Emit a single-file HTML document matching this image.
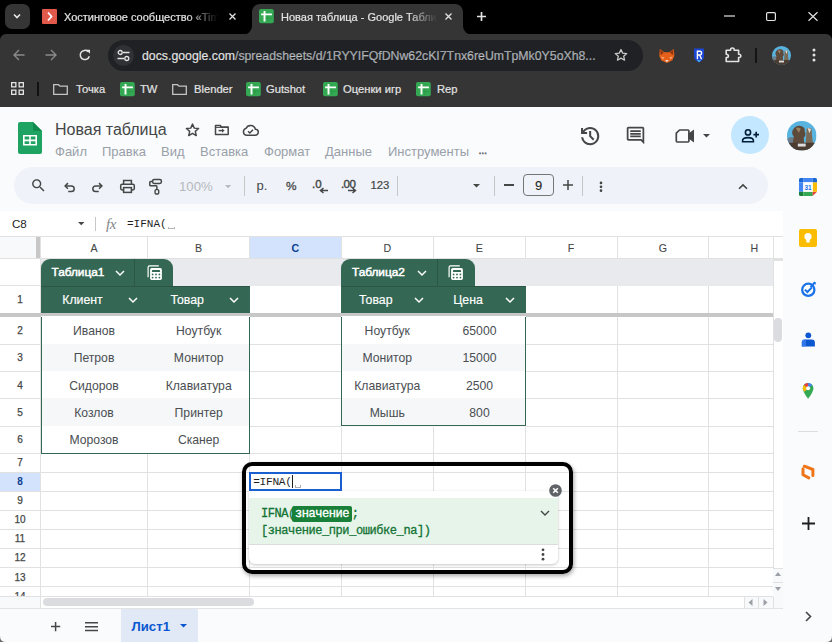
<!DOCTYPE html>
<html><head><meta charset="utf-8">
<style>
*{box-sizing:border-box;margin:0;padding:0}
html,body{width:832px;height:642px;overflow:hidden;background:#000;font-family:"Liberation Sans",sans-serif}
.a{position:absolute}
svg{position:absolute;overflow:visible}
.t{position:absolute;white-space:nowrap;line-height:1}
/* chrome */
#tabs{left:0;top:0;width:832px;height:35px;background:#000}
#tb{left:0;top:34px;width:832px;height:73px;background:#353535;border-radius:6px 6px 0 0}
#page{left:0;top:107px;width:832px;height:535px;background:#f9fbfd}
.ct{color:#e3e3e3;font-size:11px;-webkit-text-stroke:0.2px #e3e3e3}
.bm{color:#e3e3e3;font-size:11.2px;-webkit-text-stroke:0.2px #e3e3e3}
</style></head><body>
<!-- TAB STRIP -->
<div id="tabs" class="a"></div>
<div class="a" style="left:5px;top:4px;width:25px;height:25px;border-radius:7px;background:#353535"></div>
<svg style="left:12px;top:11px" width="10" height="10" viewBox="0 0 10 10"><path d="M2 3.5 L5 6.5 L8 3.5" fill="none" stroke="#e8e8e8" stroke-width="1.6"/></svg>
<!-- inactive tab -->
<div class="a" style="left:42px;top:9px;width:15px;height:15px;background:#e0594b;border-radius:1px"></div>
<svg style="left:42px;top:9px" width="15" height="15" viewBox="0 0 15 15"><path d="M6 3.5 L9.5 7.5 L6 11.5" fill="none" stroke="#fff" stroke-width="1.8"/></svg>
<div class="t ct" style="left:64px;top:12px;width:154px;overflow:hidden;-webkit-mask-image:linear-gradient(90deg,#000 80%,transparent)">Хостинговое сообщество «Timeweb»</div>
<svg style="left:229px;top:12.6px" width="7" height="7" viewBox="0 0 7 7"><path d="M0.5 0.5L6.5 6.5M6.5 0.5L0.5 6.5" stroke="#e3e3e3" stroke-width="1.3"/></svg>
<!-- active tab -->
<div class="a" style="left:252px;top:3.7px;width:211px;height:31.3px;background:#353535;border-radius:8px 8px 0 0"></div>
<svg style="left:243px;top:26px" width="9" height="9" viewBox="0 0 9 9"><path d="M0 9 A9 9 0 0 0 9 0 V9Z" fill="#353535"/></svg>
<svg style="left:463px;top:26px" width="9" height="9" viewBox="0 0 9 9"><path d="M9 9 A9 9 0 0 1 0 0 V9Z" fill="#353535"/></svg>
<svg style="left:259.2px;top:9.2px" width="15" height="15" viewBox="0 0 15 15"><rect width="14.8" height="14.3" rx="2" fill="#34a853"/><path d="M4.8 5.4H10.2M4.8 9.4H13M9 2.5V12.5" stroke="#2a9a48" stroke-width="0.8"/><path d="M2.1 5.4H12.9M5.5 2.1V12.6" stroke="#fff" stroke-width="1.9"/></svg>
<div class="t ct" style="left:281px;top:12px;width:156px;overflow:hidden;-webkit-mask-image:linear-gradient(90deg,#000 82%,transparent)">Новая таблица - Google Таблицы</div>
<svg style="left:445px;top:12.6px" width="7" height="7" viewBox="0 0 7 7"><path d="M0.5 0.5L6.5 6.5M6.5 0.5L0.5 6.5" stroke="#e3e3e3" stroke-width="1.3"/></svg>
<svg style="left:476.5px;top:12px" width="9" height="9" viewBox="0 0 9 9"><path d="M4.5 0V9M0 4.5H9" stroke="#e3e3e3" stroke-width="1.7"/></svg>
<!-- window controls -->
<svg style="left:724px;top:15px" width="11" height="2" viewBox="0 0 11 2"><path d="M0 1H11" stroke="#e3e3e3" stroke-width="1.2"/></svg>
<svg style="left:766px;top:12px" width="10" height="9" viewBox="0 0 10 9"><rect x="0.6" y="0.6" width="8.8" height="7.9" rx="1.2" fill="none" stroke="#e3e3e3" stroke-width="1.2"/></svg>
<svg style="left:808px;top:12px" width="10" height="9" viewBox="0 0 10 9"><path d="M0.5 0.3L9.5 8.7M9.5 0.3L0.5 8.7" stroke="#e3e3e3" stroke-width="1.2"/></svg>

<!-- TOOLBAR -->
<div id="tb" class="a"></div>
<svg style="left:13px;top:49px" width="12" height="12" viewBox="0 0 12 12"><path d="M11.5 6H1M6 1L1 6L6 11" fill="none" stroke="#8a8a8a" stroke-width="1.4"/></svg>
<svg style="left:45px;top:49px" width="12" height="12" viewBox="0 0 12 12"><path d="M0.5 6H11M6 1L11 6L6 11" fill="none" stroke="#8a8a8a" stroke-width="1.4"/></svg>
<svg style="left:79px;top:49px" width="12" height="12" viewBox="0 0 12 12"><path d="M10.3 7.2A4.6 4.6 0 1 1 9 2.6" fill="none" stroke="#e3e3e3" stroke-width="1.5"/><path d="M7 0.8H11V4.8Z" fill="#e3e3e3"/></svg>
<div class="a" style="left:108px;top:40px;width:535px;height:31px;border-radius:16px;background:#202124"></div>
<div class="a" style="left:113px;top:45px;width:21px;height:21px;border-radius:50%;background:#303134"></div>
<svg style="left:117px;top:49px" width="13" height="13" viewBox="0 0 13 13"><path d="M6 3.5H12.5M0.5 9.5H7" stroke="#e3e3e3" stroke-width="1.3"/><circle cx="3.2" cy="3.5" r="2" fill="none" stroke="#e3e3e3" stroke-width="1.3"/><circle cx="9.8" cy="9.5" r="2" fill="none" stroke="#e3e3e3" stroke-width="1.3"/></svg>
<div class="t" style="left:142px;top:50px;font-size:12.3px;color:#e3e3e3;-webkit-text-stroke:0.15px #e3e3e3">docs.google.com<span style="color:#9aa0a6">/spreadsheets/d/1RYYIFQfDNw62cKI7Tnx6reUmTpMk0Y5oXh8...</span></div>
<svg style="left:614px;top:48px" width="14" height="14" viewBox="0 0 24 24"><path d="M12 2.5l2.9 6.3 6.9.7-5.2 4.6 1.5 6.8L12 17.4l-6.1 3.5 1.5-6.8-5.2-4.6 6.9-.7z" fill="none" stroke="#c8c8c8" stroke-width="2.2" stroke-linejoin="round"/></svg>
<!-- ext icons -->
<svg style="left:0;top:0" width="832" height="642" viewBox="0 0 832 642">
<path d="M659.8 49L664.5 52.3H669.2L673.9 49L674.3 56L672.4 60.3L667.6 62.8H666.2L661.2 60.3L659.3 56Z" fill="#e6601c"/>
<path d="M660.3 49.8L663.8 52.6L660.8 55.2Z M673.4 49.8L669.9 52.6L672.9 55.2Z" fill="#8f3410"/>
<path d="M661 56.5L664.6 57.5L662.8 59.5Z M672.7 56.5L669.1 57.5L670.9 59.5Z" fill="#f5a36a"/>
<path d="M665.2 60L666.9 62.3L668.6 60Z" fill="#ece3da"/>
<path d="M694 48.6H704V56.4Q704 59.8 699 62.2Q694 59.8 694 56.4Z" fill="#1b46d3"/>
<path d="M697.4 59.2V51.2H700Q701.6 51.2 701.6 53.1Q701.6 55 700 55H697.4M699.6 55L701.6 59.2" fill="none" stroke="#fff" stroke-width="1.4"/>
<path d="M696.8 60.3L699 62.2L701.2 60.3Z" fill="#53b8ff"/>
<path d="M726.2 50.2H730.6Q730.4 48 732.4 48Q734.4 48 734.2 50.2H738.6V54.3Q740.8 54.1 740.8 55.9Q740.8 57.7 738.6 57.5V61.5H726.2V57.6Q728.4 57.6 728.4 55.9Q728.4 54.2 726.2 54.2Z" fill="none" stroke="#e3e3e3" stroke-width="1.6" stroke-linejoin="round"/>
</svg>


<div class="a" style="left:755px;top:48px;width:2px;height:15px;background:#141414"></div>
<svg style="left:771.5px;top:45.5px" width="19" height="19" viewBox="0 0 30 30"><defs><clipPath id="av1"><circle cx="15" cy="15" r="15"/></clipPath></defs><g clip-path="url(#av1)"><rect width="30" height="30" fill="#58b3df"/><path d="M0 18Q4 15 8 17V30H0Z" fill="#6d7f8c"/><path d="M6 9Q9 4 14 5Q19 6 18 11Q20 14 17 17L18 30H7Q5 22 7 16Q4 13 6 9Z" fill="#5e4a3a"/><path d="M9 7Q12 6 14 8L12 12Z" fill="#9a8266"/><path d="M20 8Q23 6 25 8L25.5 16Q27 22 26 30H19Q19 20 20 8Z" fill="#7a6a58"/><path d="M21 7.5Q23 6.8 24.5 8.5L22.8 12.5Z" fill="#e2dbd0"/><path d="M0 22H30V30H0Z" fill="#4a3c31"/><rect x="11" y="23" width="8" height="3" fill="#dcdcdc"/></g></svg>
<svg style="left:812px;top:48px" width="4" height="14" viewBox="0 0 4 14"><circle cx="2" cy="2" r="1.5" fill="#e3e3e3"/><circle cx="2" cy="7" r="1.5" fill="#e3e3e3"/><circle cx="2" cy="12" r="1.5" fill="#e3e3e3"/></svg>

<!-- BOOKMARKS -->
<svg style="left:11px;top:82px" width="13" height="13" viewBox="0 0 13 13"><g fill="none" stroke="#e3e3e3" stroke-width="1.3"><rect x="0.65" y="0.65" width="4.2" height="4.2"/><rect x="8.15" y="0.65" width="4.2" height="4.2"/><rect x="0.65" y="8.15" width="4.2" height="4.2"/><rect x="8.15" y="8.15" width="4.2" height="4.2"/></g></svg>
<div class="a" style="left:37px;top:82px;width:2px;height:14px;background:#111"></div>
<svg style="left:53px;top:84px" width="15" height="11" viewBox="0 0 15 11"><path d="M0.7 0.7H5.5L7 2.2H14.3V10.3H0.7Z" fill="none" stroke="#c4c4c4" stroke-width="1.3"/></svg>
<div class="t bm" style="left:76px;top:84px">Точка</div>
<svg style="left:120px;top:81.9px" width="15" height="15" viewBox="0 0 15 15"><rect width="14.8" height="14.3" rx="2" fill="#34a853"/><path d="M4.8 5.4H10.2M4.8 9.4H13M9 2.5V12.5" stroke="#2a9a48" stroke-width="0.8"/><path d="M2.1 5.4H12.9M5.5 2.1V12.6" stroke="#fff" stroke-width="1.9"/></svg>
<div class="t bm" style="left:140px;top:84px">TW</div>
<svg style="left:172px;top:84px" width="15" height="11" viewBox="0 0 15 11"><path d="M0.7 0.7H5.5L7 2.2H14.3V10.3H0.7Z" fill="none" stroke="#c4c4c4" stroke-width="1.3"/></svg>
<div class="t bm" style="left:194px;top:84px">Blender</div>
<svg style="left:246px;top:81.9px" width="15" height="15" viewBox="0 0 15 15"><rect width="14.8" height="14.3" rx="2" fill="#34a853"/><path d="M4.8 5.4H10.2M4.8 9.4H13M9 2.5V12.5" stroke="#2a9a48" stroke-width="0.8"/><path d="M2.1 5.4H12.9M5.5 2.1V12.6" stroke="#fff" stroke-width="1.9"/></svg>
<div class="t bm" style="left:266px;top:84px">Gutshot</div>
<svg style="left:323px;top:81.9px" width="15" height="15" viewBox="0 0 15 15"><rect width="14.8" height="14.3" rx="2" fill="#34a853"/><path d="M4.8 5.4H10.2M4.8 9.4H13M9 2.5V12.5" stroke="#2a9a48" stroke-width="0.8"/><path d="M2.1 5.4H12.9M5.5 2.1V12.6" stroke="#fff" stroke-width="1.9"/></svg>
<div class="t bm" style="left:343px;top:84px">Оценки игр</div>
<svg style="left:416px;top:81.9px" width="15" height="15" viewBox="0 0 15 15"><rect width="14.8" height="14.3" rx="2" fill="#34a853"/><path d="M4.8 5.4H10.2M4.8 9.4H13M9 2.5V12.5" stroke="#2a9a48" stroke-width="0.8"/><path d="M2.1 5.4H12.9M5.5 2.1V12.6" stroke="#fff" stroke-width="1.9"/></svg>
<div class="t bm" style="left:437px;top:84px">Rep</div>

<!-- PAGE -->
<div id="page" class="a"></div>

<!-- header -->
<svg style="left:18px;top:122px" width="24" height="32" viewBox="0 0 24 32"><path d="M2 0H15L24 9V30A2 2 0 0 1 22 32H2A2 2 0 0 1 0 30V2A2 2 0 0 1 2 0Z" fill="#1ea362"/><path d="M15 0L24 9H17A2 2 0 0 1 15 7Z" fill="#118a4e"/><path d="M5 13H19V23.5H5Z" fill="#fff"/><path d="M6.6 14.6H11.2V17.6H6.6ZM12.8 14.6H17.4V17.6H12.8ZM6.6 19.2H11.2V21.9H6.6ZM12.8 19.2H17.4V21.9H12.8Z" fill="#1ea362"/></svg>
<div class="t" style="left:55px;top:121.5px;font-size:16px;color:#444746">Новая таблица</div>
<svg style="left:185px;top:123px" width="15" height="14" viewBox="0 0 24 23"><path d="M12 1.8l2.9 6.6 7.1.6-5.4 4.7 1.6 7-6.2-3.7-6.2 3.7 1.6-7L2 9l7.1-.6z" fill="none" stroke="#444746" stroke-width="2.4" stroke-linejoin="round"/></svg>
<svg style="left:0;top:0" width="832" height="642" viewBox="0 0 832 642"><path d="M215.5 125.4H220L221.5 126.9H228.2V134.4H215.5Z" fill="none" stroke="#444746" stroke-width="1.5" stroke-linejoin="round"/><path d="M215.5 127.4H228.2" stroke="#444746" stroke-width="1"/><path d="M218.6 130.6H222.6" stroke="#444746" stroke-width="1.5"/><path d="M222 128.4L224.6 130.6L222 132.8Z" fill="#444746"/></svg>
<svg style="left:242.3px;top:125px" width="17" height="11" viewBox="0 0 17 11"><path d="M4.3 10.2H13.2A3 3 0 0 0 13.4 4.2A5 5 0 0 0 4 3.4A3.5 3.5 0 0 0 4.3 10.2Z" fill="none" stroke="#444746" stroke-width="1.5"/><path d="M6 6.3L7.8 8L11 4.8" fill="none" stroke="#444746" stroke-width="1.5"/></svg>
<div class="t" style="left:55px;top:144.8px;font-size:13px;color:#99a0a8;word-spacing:0">
<span style="position:absolute;left:0">Файл</span><span style="position:absolute;left:47px">Правка</span><span style="position:absolute;left:106px">Вид</span><span style="position:absolute;left:145px">Вставка</span><span style="position:absolute;left:209px">Формат</span><span style="position:absolute;left:270px">Данные</span><span style="position:absolute;left:333px">Инструменты</span><span style="position:absolute;left:423.5px;top:0px;font-size:11px;color:#5f6368;-webkit-text-stroke:0.5px #5f6368;letter-spacing:-0.3px">...</span></div>
<!-- right header icons -->
<svg style="left:577.8px;top:123.5px" width="24.3" height="24.3" viewBox="0 -960 960 960"><path d="M480-120q-138 0-240.5-91.5T122-440h82q14 104 92.5 172T480-200q117 0 198.5-81.5T760-480q0-117-81.5-198.5T480-760q-69 0-129 32t-101 88h110v80H120v-240h80v94q51-64 124.5-99T480-840q75 0 140.5 28.5t114 77q48.5 48.5 77 114T840-480q0 75-28.5 140.5t-77 114q-48.5 48.5-114 77T480-120Zm112-192L440-464v-216h80v184l128 128-56 56Z" fill="#444746"/></svg>
<svg style="left:625px;top:125px" width="21" height="21" viewBox="0 0 24 24"><path d="M21.99 4c0-1.1-.89-2-1.99-2H4c-1.1 0-2 .9-2 2v12c0 1.1.9 2 2 2h14l4 4-.01-18zM20 4v13.17L18.83 16H4V4h16zM6 12h12v2H6zm0-3h12v2H6zm0-3h12v2H6z" fill="#444746"/></svg>
<svg style="left:0;top:0" width="832" height="642" viewBox="0 0 832 642"><path d="M676.3 133.2L679.6 130H688Q688.9 130 688.9 130.9V141.1Q688.9 142 688 142H677.2Q676.3 142 676.3 141.1Z" fill="none" stroke="#444746" stroke-width="1.7" stroke-linejoin="round"/><path d="M688.5 133.5L694 129.6V142.4L688.5 138.5Z" fill="#444746"/></svg>
<svg style="left:703px;top:133.8px" width="7" height="3.5" viewBox="0 0 7 3.5"><path d="M0 0H7L3.5 3.5Z" fill="#444746"/></svg>
<div class="a" style="left:731px;top:116px;width:38px;height:38px;border-radius:50%;background:#c2e7ff"></div>
<svg style="left:0;top:0" width="832" height="642" viewBox="0 0 832 642"><g fill="none" stroke="#001d35" stroke-width="1.6"><circle cx="748" cy="132.4" r="2.6"/><path d="M742.6 141.8V140.6Q742.6 137.6 748 137.6Q753.4 137.6 753.4 140.6V141.8Z"/><path d="M756.2 131.8V137.4M753.4 134.6H759"/></g></svg>
<svg style="left:786.5px;top:120.5px" width="29.5" height="29.5" viewBox="0 0 30 30"><defs><clipPath id="av2"><circle cx="15" cy="15" r="15"/></clipPath></defs><g clip-path="url(#av2)"><rect width="30" height="30" fill="#58b3df"/><path d="M0 18Q4 15 8 17V30H0Z" fill="#6d7f8c"/><path d="M6 9Q9 4 14 5Q19 6 18 11Q20 14 17 17L18 30H7Q5 22 7 16Q4 13 6 9Z" fill="#5e4a3a"/><path d="M9 7Q12 6 14 8L12 12Z" fill="#9a8266"/><path d="M20 8Q23 6 25 8L25.5 16Q27 22 26 30H19Q19 20 20 8Z" fill="#7a6a58"/><path d="M21 7.5Q23 6.8 24.5 8.5L22.8 12.5Z" fill="#e2dbd0"/><path d="M0 22H30V30H0Z" fill="#4a3c31"/><rect x="11" y="23" width="8" height="3" fill="#dcdcdc"/></g></svg>

<!-- toolbar -->
<div class="a" style="left:14px;top:167px;width:754px;height:37px;border-radius:19px;background:#eff2f8"></div>
<svg style="left:29.5px;top:176.5px" width="17" height="17" viewBox="0 0 24 24"><path d="M15.5 14h-.79l-.28-.27C15.41 12.59 16 11.11 16 9.5 16 5.91 13.09 3 9.5 3S3 5.91 3 9.5 5.91 16 9.5 16c1.61 0 3.09-.59 4.23-1.57l.27.28v.79l5 4.99L20.49 19l-4.99-5zm-6 0C7.01 14 5 11.99 5 9.5S7.01 5 9.5 5 14 7.01 14 9.5 11.99 14 9.5 14z" fill="#444746"/></svg>
<svg style="left:62px;top:180px" width="15" height="15" viewBox="0 0 24 24"><path d="M6 9.5H15a4.5 4.5 0 0 1 0 9H10" fill="none" stroke="#444746" stroke-width="2.4"/><path d="M9.5 5L5 9.5L9.5 14" fill="none" stroke="#444746" stroke-width="2.4"/></svg>
<svg style="left:90px;top:179.7px" width="15" height="15" viewBox="0 0 24 24"><path d="M18 9.5H9a4.5 4.5 0 0 0 0 9H14" fill="none" stroke="#444746" stroke-width="2.4"/><path d="M14.5 5L19 9.5L14.5 14" fill="none" stroke="#444746" stroke-width="2.4"/></svg>
<svg style="left:0;top:0" width="832" height="642" viewBox="0 0 832 642"><g fill="none" stroke="#444746" stroke-width="1.5"><path d="M123.6 184V180.6H131.4V184"/><rect x="120.7" y="184.3" width="13.6" height="5.6" rx="1.4"/><rect x="123.6" y="187.6" width="7.8" height="4.8" fill="#eff2f8"/><rect x="152.6" y="179.4" width="8.8" height="4" rx="1.6"/><path d="M152.6 181.4H150.6Q149.8 181.4 149.8 182.2V185Q149.8 185.8 150.6 185.8H156.1Q156.9 185.8 156.9 186.6V189.3"/><rect x="155.1" y="189.6" width="3.6" height="4.4" rx="1" stroke-width="1.4"/></g></svg>

<div class="t" style="left:179px;top:180px;font-size:13.2px;color:#b6b9bd">100%</div>
<svg style="left:225.2px;top:184.6px" width="6.2" height="3.2" viewBox="0 0 6.2 3.2"><path d="M0 0H6.2L3.1 3.2Z" fill="#b6b9bd"/></svg>
<div class="a" style="left:244px;top:176px;width:1px;height:20px;background:#c7c7c7"></div>
<div class="t" style="left:256.5px;top:179.2px;font-size:13px;color:#444746">р.</div>
<div class="t" style="left:286px;top:180.5px;font-size:11.8px;color:#444746;-webkit-text-stroke:0.3px #444746">%</div>
<div class="t" style="left:312px;top:178.8px;font-size:11.5px;color:#444746;-webkit-text-stroke:0.4px #444746">.0</div>
<svg style="left:319px;top:187px" width="9" height="7" viewBox="0 0 9 7"><path d="M9 3.5H2M4.5 1L1.5 3.5L4.5 6" fill="none" stroke="#444746" stroke-width="1.5"/></svg>
<div class="t" style="left:341px;top:178.8px;font-size:11.5px;color:#444746;-webkit-text-stroke:0.4px #444746;letter-spacing:-0.6px">.00</div>
<svg style="left:348px;top:187px" width="9" height="7" viewBox="0 0 9 7"><path d="M0 3.5H7M4.5 1L7.5 3.5L4.5 6" fill="none" stroke="#444746" stroke-width="1.5"/></svg>
<div class="t" style="left:370.5px;top:180.2px;font-size:11.3px;color:#444746;-webkit-text-stroke:0.2px #444746">123</div>
<div class="a" style="left:397px;top:176px;width:1px;height:20px;background:#c7c7c7"></div>
<svg style="left:472.8px;top:184px" width="7" height="3.5" viewBox="0 0 7 3.5"><path d="M0 0H7L3.5 3.5Z" fill="#444746"/></svg>
<div class="a" style="left:494px;top:176px;width:1px;height:20px;background:#c7c7c7"></div>
<div class="a" style="left:504px;top:184.3px;width:10.2px;height:1.5px;background:#444746"></div>
<div class="a" style="left:523px;top:174px;width:31px;height:22px;border:1.2px solid #747775;border-radius:4px"></div>
<div class="t" style="left:523px;top:179px;width:31px;text-align:center;font-size:13px;color:#1f1f1f;-webkit-text-stroke:0.1px #1f1f1f">9</div>
<svg style="left:562.5px;top:180.3px" width="10" height="10" viewBox="0 0 10 10"><path d="M5 0V10M0 5H10" stroke="#444746" stroke-width="1.5"/></svg>
<div class="a" style="left:582px;top:176px;width:1px;height:20px;background:#c7c7c7"></div>
<svg style="left:599px;top:180.6px" width="4" height="12" viewBox="0 0 4 12"><circle cx="2" cy="1.9" r="1.35" fill="#444746"/><circle cx="2" cy="5.8" r="1.35" fill="#444746"/><circle cx="2" cy="9.7" r="1.35" fill="#444746"/></svg>
<svg style="left:738px;top:182.6px" width="10" height="7" viewBox="0 0 10 7"><path d="M1 5.8L5 1.9L9 5.8" fill="none" stroke="#444746" stroke-width="1.6"/></svg>

<!-- formula bar -->
<div class="a" style="left:0;top:211px;width:783px;height:26px;background:#fff"></div>
<div class="t" style="left:12px;top:217.5px;font-size:11.6px;color:#1f1f1f">C8</div>
<svg style="left:78px;top:222.2px" width="6.5" height="3.2" viewBox="0 0 6.5 3.2"><path d="M0 0H6.5L3.25 3.2Z" fill="#444746"/></svg>
<div class="a" style="left:95px;top:217px;width:1px;height:14px;background:#c7c7c7"></div>
<div class="t" style="left:106px;top:216.5px;font-size:15px;font-family:'Liberation Serif';font-style:italic;color:#80868b;letter-spacing:-0.5px">fx</div>
<div class="t" style="left:127px;top:219px;font-size:11px;font-family:'Liberation Mono';color:#1f1f1f">=IFNA(</div><div class="a" style="left:168px;top:226.5px;width:6.5px;height:2.6px;border:1px solid #b5b5b5;border-top:none"></div>

<!-- GRID -->
<div class="a" style="left:0;top:236px;width:783px;height:372px;background:#fff"></div>
<div class="a" style="left:0;top:0;width:772.5px;height:597px;overflow:hidden">
<div class="a" style="left:249.5px;top:236.5px;width:91.5px;height:22.0px;background:#d3e3fd"></div>
<div class="a" style="left:0.0px;top:236.5px;width:36.3px;height:22.0px;background:#f8f9fa"></div>
<div class="a" style="left:36.3px;top:236.5px;width:4.2px;height:22.0px;background:#c7c7c7"></div>
<div class="a" style="left:0.0px;top:258.0px;width:40.5px;height:0.1px;"></div>
<div class="a" style="left:0.0px;top:472.4px;width:40.5px;height:19.0px;background:#d3e3fd"></div>
<div class="a" style="left:0.0px;top:236.0px;width:772.5px;height:1.0px;background:#e1e1e1"></div>
<div class="a" style="left:0.0px;top:258.0px;width:772.5px;height:1.0px;background:#e1e1e1"></div>
<div class="a" style="left:0.0px;top:285.0px;width:772.5px;height:1.0px;background:#e1e1e1"></div>
<div class="a" style="left:0.0px;top:343.6px;width:772.5px;height:1.0px;background:#e1e1e1"></div>
<div class="a" style="left:0.0px;top:371.0px;width:772.5px;height:1.0px;background:#e1e1e1"></div>
<div class="a" style="left:0.0px;top:398.4px;width:772.5px;height:1.0px;background:#e1e1e1"></div>
<div class="a" style="left:0.0px;top:425.8px;width:772.5px;height:1.0px;background:#e1e1e1"></div>
<div class="a" style="left:0.0px;top:453.2px;width:772.5px;height:1.0px;background:#e1e1e1"></div>
<div class="a" style="left:0.0px;top:471.9px;width:772.5px;height:1.0px;background:#e1e1e1"></div>
<div class="a" style="left:0.0px;top:490.9px;width:772.5px;height:1.0px;background:#e1e1e1"></div>
<div class="a" style="left:0.0px;top:509.9px;width:772.5px;height:1.0px;background:#e1e1e1"></div>
<div class="a" style="left:0.0px;top:528.9px;width:772.5px;height:1.0px;background:#e1e1e1"></div>
<div class="a" style="left:0.0px;top:548.0px;width:772.5px;height:1.0px;background:#e1e1e1"></div>
<div class="a" style="left:0.0px;top:567.1px;width:772.5px;height:1.0px;background:#e1e1e1"></div>
<div class="a" style="left:0.0px;top:586.2px;width:772.5px;height:1.0px;background:#e1e1e1"></div>
<div class="a" style="left:0.0px;top:596.6px;width:783.0px;height:1.0px;background:#e1e1e1"></div>
<div class="a" style="left:40.0px;top:236.0px;width:1.0px;height:361.0px;background:#e1e1e1"></div>
<div class="a" style="left:147.0px;top:236.0px;width:1.0px;height:361.0px;background:#e1e1e1"></div>
<div class="a" style="left:249.0px;top:236.0px;width:1.0px;height:361.0px;background:#e1e1e1"></div>
<div class="a" style="left:340.5px;top:236.0px;width:1.0px;height:361.0px;background:#e1e1e1"></div>
<div class="a" style="left:433.0px;top:236.0px;width:1.0px;height:361.0px;background:#e1e1e1"></div>
<div class="a" style="left:524.5px;top:236.0px;width:1.0px;height:361.0px;background:#e1e1e1"></div>
<div class="a" style="left:616.5px;top:236.0px;width:1.0px;height:361.0px;background:#e1e1e1"></div>
<div class="a" style="left:708.0px;top:236.0px;width:1.0px;height:361.0px;background:#e1e1e1"></div>
<div class="a" style="left:40.5px;top:258.5px;width:732.0px;height:27.0px;background:#e8eaed"></div>
<div class="a" style="left:0.0px;top:313.3px;width:772.5px;height:3.4px;background:#c7c7c7"></div>
<div class="t" style="left:40.5px;top:242.6px;width:107.0px;text-align:center;font-size:10.6px;color:#444746;-webkit-text-stroke:0.1px #444746">A</div>
<div class="t" style="left:147.5px;top:242.6px;width:102.0px;text-align:center;font-size:10.6px;color:#444746;-webkit-text-stroke:0.1px #444746">B</div>
<div class="t" style="left:249.5px;top:242.6px;width:91.5px;text-align:center;font-size:10.6px;color:#0b3d91;font-weight:bold">C</div>
<div class="t" style="left:341.0px;top:242.6px;width:92.5px;text-align:center;font-size:10.6px;color:#444746;-webkit-text-stroke:0.1px #444746">D</div>
<div class="t" style="left:433.5px;top:242.6px;width:91.5px;text-align:center;font-size:10.6px;color:#444746;-webkit-text-stroke:0.1px #444746">E</div>
<div class="t" style="left:525.0px;top:242.6px;width:92.0px;text-align:center;font-size:10.6px;color:#444746;-webkit-text-stroke:0.1px #444746">F</div>
<div class="t" style="left:617.0px;top:242.6px;width:91.5px;text-align:center;font-size:10.6px;color:#444746;-webkit-text-stroke:0.1px #444746">G</div>
<div class="t" style="left:708.5px;top:242.6px;width:91.5px;text-align:center;font-size:10.6px;color:#444746;-webkit-text-stroke:0.1px #444746">H</div>
<div class="t" style="left:0.0px;top:295.1px;width:40.0px;text-align:center;font-size:10px;color:#444746;-webkit-text-stroke:0.25px #444746">1</div>
<div class="t" style="left:0.0px;top:325.8px;width:40.0px;text-align:center;font-size:10px;color:#444746;-webkit-text-stroke:0.25px #444746">2</div>
<div class="t" style="left:0.0px;top:353.2px;width:40.0px;text-align:center;font-size:10px;color:#444746;-webkit-text-stroke:0.25px #444746">3</div>
<div class="t" style="left:0.0px;top:380.6px;width:40.0px;text-align:center;font-size:10px;color:#444746;-webkit-text-stroke:0.25px #444746">4</div>
<div class="t" style="left:0.0px;top:408.0px;width:40.0px;text-align:center;font-size:10px;color:#444746;-webkit-text-stroke:0.25px #444746">5</div>
<div class="t" style="left:0.0px;top:435.4px;width:40.0px;text-align:center;font-size:10px;color:#444746;-webkit-text-stroke:0.25px #444746">6</div>
<div class="t" style="left:0.0px;top:458.4px;width:40.0px;text-align:center;font-size:10px;color:#444746;-webkit-text-stroke:0.25px #444746">7</div>
<div class="t" style="left:0.0px;top:477.3px;width:40.0px;text-align:center;font-size:10px;color:#0b3d91;font-weight:bold">8</div>
<div class="t" style="left:0.0px;top:496.3px;width:40.0px;text-align:center;font-size:10px;color:#444746;-webkit-text-stroke:0.25px #444746">9</div>
<div class="t" style="left:0.0px;top:515.3px;width:40.0px;text-align:center;font-size:10px;color:#444746;-webkit-text-stroke:0.25px #444746">10</div>
<div class="t" style="left:0.0px;top:534.4px;width:40.0px;text-align:center;font-size:10px;color:#444746;-webkit-text-stroke:0.25px #444746">11</div>
<div class="t" style="left:0.0px;top:553.4px;width:40.0px;text-align:center;font-size:10px;color:#444746;-webkit-text-stroke:0.25px #444746">12</div>
<div class="t" style="left:0.0px;top:572.6px;width:40.0px;text-align:center;font-size:10px;color:#444746;-webkit-text-stroke:0.25px #444746">13</div>
<div class="t" style="left:0.0px;top:591.6px;width:40.0px;text-align:center;font-size:10px;color:#444746;-webkit-text-stroke:0.25px #444746">14</div>
<div class="a" style="left:40.5px;top:258.7px;width:132.0px;height:28.0px;background:#356854;border-radius:9px 9px 0 0"></div>
<div class="a" style="left:134.2px;top:259.0px;width:1.0px;height:27.0px;background:#2a5643"></div>
<div class="t" style="left:51.5px;top:267.3px;font-size:11.8px;color:#fff;-webkit-text-stroke:0.5px #fff">Таблица1</div>
<svg style="left:115.0px;top:269.5px" width="10" height="6" viewBox="0 0 10 6"><path d="M1 1L5 5L9 1" fill="none" stroke="#fff" stroke-width="1.5"/></svg>
<svg style="left:146.7px;top:265.0px" width="16" height="16" viewBox="0 0 16 16"><path d="M1.1 12.2V2.2Q1.1 0.8 2.5 0.8H11.8" fill="none" stroke="#fff" stroke-width="1.2"/><rect x="3.1" y="3.1" width="11.8" height="11.8" rx="1.6" fill="#fff"/><rect x="4.9" y="4.9" width="8.2" height="2.2" rx="0.9" fill="#356854"/><g fill="#356854"><circle cx="5.6" cy="9.4" r="0.9"/><circle cx="9" cy="9.4" r="0.9"/><circle cx="12.4" cy="9.4" r="0.9"/><circle cx="5.6" cy="12.6" r="0.9"/><circle cx="9" cy="12.6" r="0.9"/><circle cx="12.4" cy="12.6" r="0.9"/></g></svg>
<div class="a" style="left:40.5px;top:285.8px;width:209.3px;height:27.6px;background:#356854"></div>
<div class="a" style="left:40.5px;top:285.5px;width:209.3px;height:1.0px;background:#2a5643"></div>
<div class="t" style="left:29.0px;top:293.8px;width:107.0px;text-align:center;font-size:12.3px;color:#fff;-webkit-text-stroke:0.15px #fff">Клиент</div>
<div class="t" style="left:136.0px;top:293.8px;width:102.3px;text-align:center;font-size:12.3px;color:#fff;-webkit-text-stroke:0.15px #fff">Товар</div>
<svg style="left:128.0px;top:297.0px" width="10" height="6" viewBox="0 0 10 6"><path d="M1 1L5 5L9 1" fill="none" stroke="#fff" stroke-width="1.5"/></svg>
<svg style="left:229.3px;top:297.0px" width="10" height="6" viewBox="0 0 10 6"><path d="M1 1L5 5L9 1" fill="none" stroke="#fff" stroke-width="1.5"/></svg>
<div class="a" style="left:40.5px;top:316.2px;width:209.3px;height:28.4px;background:#fff"></div>
<div class="t" style="left:40.5px;top:324.8px;width:107.0px;text-align:center;font-size:12.2px;color:#4a4e52">Иванов</div>
<div class="t" style="left:147.5px;top:324.8px;width:102.3px;text-align:center;font-size:12.2px;color:#4a4e52">Ноутбук</div>
<div class="a" style="left:40.5px;top:343.6px;width:209.3px;height:28.4px;background:#f5f7f9"></div>
<div class="t" style="left:40.5px;top:352.2px;width:107.0px;text-align:center;font-size:12.2px;color:#4a4e52">Петров</div>
<div class="t" style="left:147.5px;top:352.2px;width:102.3px;text-align:center;font-size:12.2px;color:#4a4e52">Монитор</div>
<div class="a" style="left:40.5px;top:371.0px;width:209.3px;height:28.4px;background:#fff"></div>
<div class="t" style="left:40.5px;top:379.6px;width:107.0px;text-align:center;font-size:12.2px;color:#4a4e52">Сидоров</div>
<div class="t" style="left:147.5px;top:379.6px;width:102.3px;text-align:center;font-size:12.2px;color:#4a4e52">Клавиатура</div>
<div class="a" style="left:40.5px;top:398.4px;width:209.3px;height:28.4px;background:#f5f7f9"></div>
<div class="t" style="left:40.5px;top:407.0px;width:107.0px;text-align:center;font-size:12.2px;color:#4a4e52">Козлов</div>
<div class="t" style="left:147.5px;top:407.0px;width:102.3px;text-align:center;font-size:12.2px;color:#4a4e52">Принтер</div>
<div class="a" style="left:40.5px;top:425.8px;width:209.3px;height:28.4px;background:#fff"></div>
<div class="t" style="left:40.5px;top:434.4px;width:107.0px;text-align:center;font-size:12.2px;color:#4a4e52">Морозов</div>
<div class="t" style="left:147.5px;top:434.4px;width:102.3px;text-align:center;font-size:12.2px;color:#4a4e52">Сканер</div>
<div class="a" style="left:40.5px;top:316.5px;width:209.3px;height:137.2px;border:1px solid #356854;border-top:none"></div>
<div class="a" style="left:341.0px;top:258.7px;width:133.5px;height:28.0px;background:#356854;border-radius:9px 9px 0 0"></div>
<div class="a" style="left:436.5px;top:259.0px;width:1.0px;height:27.0px;background:#2a5643"></div>
<div class="t" style="left:352.0px;top:267.3px;font-size:11.8px;color:#fff;-webkit-text-stroke:0.5px #fff">Таблица2</div>
<svg style="left:416.5px;top:269.5px" width="10" height="6" viewBox="0 0 10 6"><path d="M1 1L5 5L9 1" fill="none" stroke="#fff" stroke-width="1.5"/></svg>
<svg style="left:448.0px;top:265.0px" width="16" height="16" viewBox="0 0 16 16"><path d="M1.1 12.2V2.2Q1.1 0.8 2.5 0.8H11.8" fill="none" stroke="#fff" stroke-width="1.2"/><rect x="3.1" y="3.1" width="11.8" height="11.8" rx="1.6" fill="#fff"/><rect x="4.9" y="4.9" width="8.2" height="2.2" rx="0.9" fill="#356854"/><g fill="#356854"><circle cx="5.6" cy="9.4" r="0.9"/><circle cx="9" cy="9.4" r="0.9"/><circle cx="12.4" cy="9.4" r="0.9"/><circle cx="5.6" cy="12.6" r="0.9"/><circle cx="9" cy="12.6" r="0.9"/><circle cx="12.4" cy="12.6" r="0.9"/></g></svg>
<div class="a" style="left:341.0px;top:285.8px;width:184.5px;height:27.6px;background:#356854"></div>
<div class="a" style="left:341.0px;top:285.5px;width:184.5px;height:1.0px;background:#2a5643"></div>
<div class="t" style="left:329.5px;top:293.8px;width:92.5px;text-align:center;font-size:12.3px;color:#fff;-webkit-text-stroke:0.15px #fff">Товар</div>
<div class="t" style="left:422.0px;top:293.8px;width:92.0px;text-align:center;font-size:12.3px;color:#fff;-webkit-text-stroke:0.15px #fff">Цена</div>
<svg style="left:414.0px;top:297.0px" width="10" height="6" viewBox="0 0 10 6"><path d="M1 1L5 5L9 1" fill="none" stroke="#fff" stroke-width="1.5"/></svg>
<svg style="left:505.0px;top:297.0px" width="10" height="6" viewBox="0 0 10 6"><path d="M1 1L5 5L9 1" fill="none" stroke="#fff" stroke-width="1.5"/></svg>
<div class="a" style="left:341.0px;top:316.2px;width:184.5px;height:28.4px;background:#fff"></div>
<div class="t" style="left:341.0px;top:324.8px;width:92.5px;text-align:center;font-size:12.2px;color:#4a4e52">Ноутбук</div>
<div class="t" style="left:433.5px;top:324.8px;width:92.0px;text-align:center;font-size:12.2px;color:#4a4e52">65000</div>
<div class="a" style="left:341.0px;top:343.6px;width:184.5px;height:28.4px;background:#f5f7f9"></div>
<div class="t" style="left:341.0px;top:352.2px;width:92.5px;text-align:center;font-size:12.2px;color:#4a4e52">Монитор</div>
<div class="t" style="left:433.5px;top:352.2px;width:92.0px;text-align:center;font-size:12.2px;color:#4a4e52">15000</div>
<div class="a" style="left:341.0px;top:371.0px;width:184.5px;height:28.4px;background:#fff"></div>
<div class="t" style="left:341.0px;top:379.6px;width:92.5px;text-align:center;font-size:12.2px;color:#4a4e52">Клавиатура</div>
<div class="t" style="left:433.5px;top:379.6px;width:92.0px;text-align:center;font-size:12.2px;color:#4a4e52">2500</div>
<div class="a" style="left:341.0px;top:398.4px;width:184.5px;height:28.4px;background:#f5f7f9"></div>
<div class="t" style="left:341.0px;top:407.0px;width:92.5px;text-align:center;font-size:12.2px;color:#4a4e52">Мышь</div>
<div class="t" style="left:433.5px;top:407.0px;width:92.0px;text-align:center;font-size:12.2px;color:#4a4e52">800</div>
<div class="a" style="left:341.0px;top:316.5px;width:184.5px;height:109.8px;border:1px solid #356854;border-top:none"></div>
</div>
<!-- scrollbars -->
<div class="a" style="left:0;top:596.2px;width:772.5px;height:11.8px;background:#fff;border-top:1.5px solid #e1e1e1"></div>
<div class="a" style="left:0;top:597.2px;width:40.5px;height:10.8px;background:#f8f9fa;border-right:1px solid #e1e1e1"></div>
<div class="a" style="left:43px;top:598.4px;width:210.5px;height:7.8px;border-radius:4px;background:#dadce0"></div>
<div class="a" style="left:744px;top:597px;width:28.5px;height:11px;background:#f8f9fa;border-left:1px solid #e1e1e1"></div>
<div class="a" style="left:758px;top:597px;width:1px;height:11px;background:#e1e1e1"></div>
<svg style="left:748px;top:599px" width="5" height="7" viewBox="0 0 5 7"><path d="M4.5 0V7L0.5 3.5Z" fill="#9aa0a6"/></svg>
<svg style="left:763px;top:599px" width="5" height="7" viewBox="0 0 5 7"><path d="M0.5 0V7L4.5 3.5Z" fill="#9aa0a6"/></svg>
<div class="a" style="left:772.5px;top:236px;width:10.5px;height:372px;background:#fff;border-left:1px solid #e1e1e1"></div>
<div class="a" style="left:772.5px;top:258px;width:10.5px;height:2.5px;background:#e1e1e1"></div>
<div class="a" style="left:772.5px;top:236px;width:10.5px;height:1px;background:#e1e1e1"></div>
<div class="a" style="left:774px;top:318px;width:8px;height:24px;border-radius:4px;background:#dadce0"></div>
<div class="a" style="left:773px;top:567.5px;width:10px;height:29px;background:#f8f9fa;border-top:1px solid #e1e1e1"></div>
<div class="a" style="left:773px;top:582px;width:10px;height:1px;background:#e1e1e1"></div>
<svg style="left:775px;top:572px" width="6" height="4" viewBox="0 0 6 4"><path d="M0 4H6L3 0Z" fill="#9aa0a6"/></svg>
<svg style="left:775px;top:587px" width="6" height="4" viewBox="0 0 6 4"><path d="M0 0H6L3 4Z" fill="#9aa0a6"/></svg>
<div class="a" style="left:772.5px;top:596.6px;width:10.5px;height:11.4px;background:#f8f9fa;border-left:1px solid #e1e1e1"></div>

<!-- bottom bar -->
<div class="a" style="left:0;top:607.8px;width:783px;height:34.2px;background:#f9fbfd;border-top:1px solid #e3e3e3"></div>
<svg style="left:50.8px;top:622px" width="9.2" height="9.2" viewBox="0 0 9.2 9.2"><path d="M4.6 0V9.2M0 4.6H9.2" stroke="#444746" stroke-width="1.5"/></svg>
<svg style="left:85.1px;top:621.8px" width="13" height="10" viewBox="0 0 13 10"><path d="M0 0.8H13M0 4.7H13M0 8.6H13" stroke="#444746" stroke-width="1.5"/></svg>
<div class="a" style="left:120.5px;top:608.5px;width:77.5px;height:33.5px;background:#e1e9f7"></div>
<div class="t" style="left:131.5px;top:619.7px;font-size:13.2px;font-weight:bold;color:#0b57d0">Лист1</div>
<svg style="left:180px;top:624px" width="7" height="4" viewBox="0 0 7 4"><path d="M0 0H7L3.5 3.5Z" fill="#0b57d0"/></svg>

<!-- side panel -->
<div class="a" style="left:783px;top:160px;width:49px;height:482px;background:#f9fbfd"></div>
<svg style="left:799px;top:178px" width="18" height="18" viewBox="0 0 18 18"><path d="M13.7 0H4.3V4.3H13.7Z" fill="#4285f4"/><path d="M0 1.5A1.5 1.5 0 0 1 1.5 0H4.3V4.3H0Z" fill="#1967d2"/><rect x="0" y="4.3" width="4.3" height="9.4" fill="#4285f4"/><path d="M0 13.7H4.3V18H1.5A1.5 1.5 0 0 1 0 16.5Z" fill="#188038"/><rect x="4.3" y="13.7" width="9.4" height="4.3" fill="#34a853"/><path d="M13.7 13.7H18L13.7 18Z" fill="#ea4335"/><rect x="13.7" y="4.3" width="4.3" height="9.4" fill="#fbbc04"/><path d="M13.7 0H16.5A1.5 1.5 0 0 1 18 1.5V4.3H13.7Z" fill="#1967d2"/><rect x="4.3" y="4.3" width="9.4" height="9.4" fill="#fff"/><text x="9" y="12.2" font-size="6.5" font-family="Liberation Sans" font-weight="bold" fill="#1a73e8" text-anchor="middle">31</text></svg>
<svg style="left:799px;top:229px" width="18" height="18" viewBox="0 0 18 18"><rect width="18" height="18" rx="2" fill="#fbbc04"/><circle cx="9" cy="7.5" r="3.6" fill="#fff"/><rect x="7.3" y="10" width="3.4" height="3.5" fill="#fff"/></svg>
<svg style="left:0;top:0" width="832" height="642" viewBox="0 0 832 642"><circle cx="808.3" cy="289.8" r="6.1" fill="none" stroke="#1a73e8" stroke-width="2.3"/><path d="M805 289.6L807.4 292L812 287.4" fill="none" stroke="#1a73e8" stroke-width="2"/><path d="M810.5 287L815.2 282.3" stroke="#1a73e8" stroke-width="2"/><path d="M813 282.2H815.6V284.8Z" fill="#1a73e8"/></svg>
<svg style="left:0;top:0" width="832" height="642" viewBox="0 0 832 642"><circle cx="808.3" cy="335.3" r="2.9" fill="#0b57d0"/><path d="M801.8 346.6V342.6Q801.8 339.6 805 339.6H811.7Q814.9 339.6 814.9 342.6V346.6Z" fill="#0b57d0"/><path d="M801.8 346.6V342.6Q801.8 339.6 804 339.6H806V346.6Z" fill="#4285f4" opacity="0.7"/></svg>
<svg style="left:802.2px;top:382.8px" width="12.2" height="15.8" viewBox="0 0 16 20.7"><path d="M8 0A7 7 0 0 0 1 7C1 12 8 20.7 8 20.7S15 12 15 7A7 7 0 0 0 8 0Z" fill="#34a853"/><path d="M8 0A7 7 0 0 0 2.6 2.5L8 7L13.4 2.5A7 7 0 0 0 8 0Z" fill="#4285f4"/><path d="M2.6 2.5L8 7L5 4.5Z" fill="#ea4335"/><path d="M1 7A7 7 0 0 1 2.6 2.5L8 7L3.2 11.5C2 10 1 8.5 1 7Z" fill="#fbbc04"/><path d="M2.6 2.5A7 7 0 0 1 8 0L8 7Z" fill="#ea4335"/><circle cx="8" cy="7" r="2.6" fill="#fff"/></svg>
<div class="a" style="left:798px;top:431px;width:20px;height:1px;background:#dadce0"></div>
<svg style="left:0;top:0" width="832" height="642" viewBox="0 0 832 642"><g fill="none" stroke="#f07418" stroke-width="3" stroke-linecap="round" stroke-linejoin="round"><path d="M804.3 466.2L812.9 469.5V475.4"/><path d="M803 468.8V474.8L808.8 477.9"/></g></svg>
<svg style="left:802px;top:517px" width="13" height="13" viewBox="0 0 13 13"><path d="M6.5 0V13M0 6.5H13" stroke="#1f1f1f" stroke-width="1.8"/></svg>
<svg style="left:805px;top:611px" width="7" height="11" viewBox="0 0 7 11"><path d="M1 1L5.5 5.5L1 10" fill="none" stroke="#444746" stroke-width="1.6"/></svg>

<!-- popup frame -->
<div class="a" style="left:249px;top:491.3px;width:309px;height:73px;background:#fff;border-radius:0 0 6px 6px;box-shadow:0 1px 3px rgba(60,64,67,0.3)"></div>
<div class="a" style="left:249px;top:498px;width:309px;height:46px;background:#e6f4ea"></div>
<div class="a" style="left:249px;top:543.5px;width:309px;height:1px;background:#dadce0"></div>
<div class="t" style="left:261px;top:506.2px;font-family:'Liberation Mono';font-size:12px;letter-spacing:-0.42px;color:#137333;-webkit-text-stroke:0.3px #137333;line-height:17.3px">IFNA(<span style="background:#188038;color:#fff;-webkit-text-stroke:0.35px #fff;border-radius:2px;padding:1px 2.5px;margin-left:-2.5px">значение</span>;<br>[значение_при_ошибке_na])</div>
<svg style="left:540px;top:510px" width="10" height="6" viewBox="0 0 10 6"><path d="M1 1L5 5L9 1" fill="none" stroke="#444746" stroke-width="1.4"/></svg>
<svg style="left:541px;top:548px" width="4" height="13" viewBox="0 0 4 13"><circle cx="2" cy="1.8" r="1.4" fill="#444746"/><circle cx="2" cy="6.5" r="1.4" fill="#444746"/><circle cx="2" cy="11.2" r="1.4" fill="#444746"/></svg>
<svg style="left:548.1px;top:483.1px" width="15" height="15" viewBox="0 0 15 15"><circle cx="7.5" cy="7.5" r="6.3" fill="#5f6368"/><path d="M5.2 5.2L9.8 9.8M9.8 5.2L5.2 9.8" stroke="#fff" stroke-width="1.6"/></svg>
<!-- cell editor -->
<div class="a" style="left:249px;top:471.8px;width:92.7px;height:19px;background:#fff;border:2px solid #1a5fd0"></div>
<div class="t" style="left:253.2px;top:476.6px;font-family:'Liberation Mono';font-size:11.2px;letter-spacing:-0.3px;color:#1f1f1f">=IFNA(</div>
<div class="a" style="left:292px;top:475px;width:1px;height:13px;background:#1f1f1f"></div>
<div class="a" style="left:294.5px;top:484.5px;width:6px;height:3px;border:1px solid #b0b0b0;border-top:none"></div>
<div class="a" style="left:241.5px;top:461.5px;width:331px;height:112.5px;border:4.3px solid #000;border-radius:10px;box-shadow:1px 2px 4px rgba(0,0,0,0.35)"></div>

<svg style="left:0;top:636px" width="6" height="6" viewBox="0 0 6 6"><path d="M0 0Q0 6 6 6H0Z" fill="#6a6a6a"/></svg>
<svg style="left:826px;top:636px" width="6" height="6" viewBox="0 0 6 6"><path d="M6 0Q6 6 0 6H6Z" fill="#6a6a6a"/></svg>


</body></html>
